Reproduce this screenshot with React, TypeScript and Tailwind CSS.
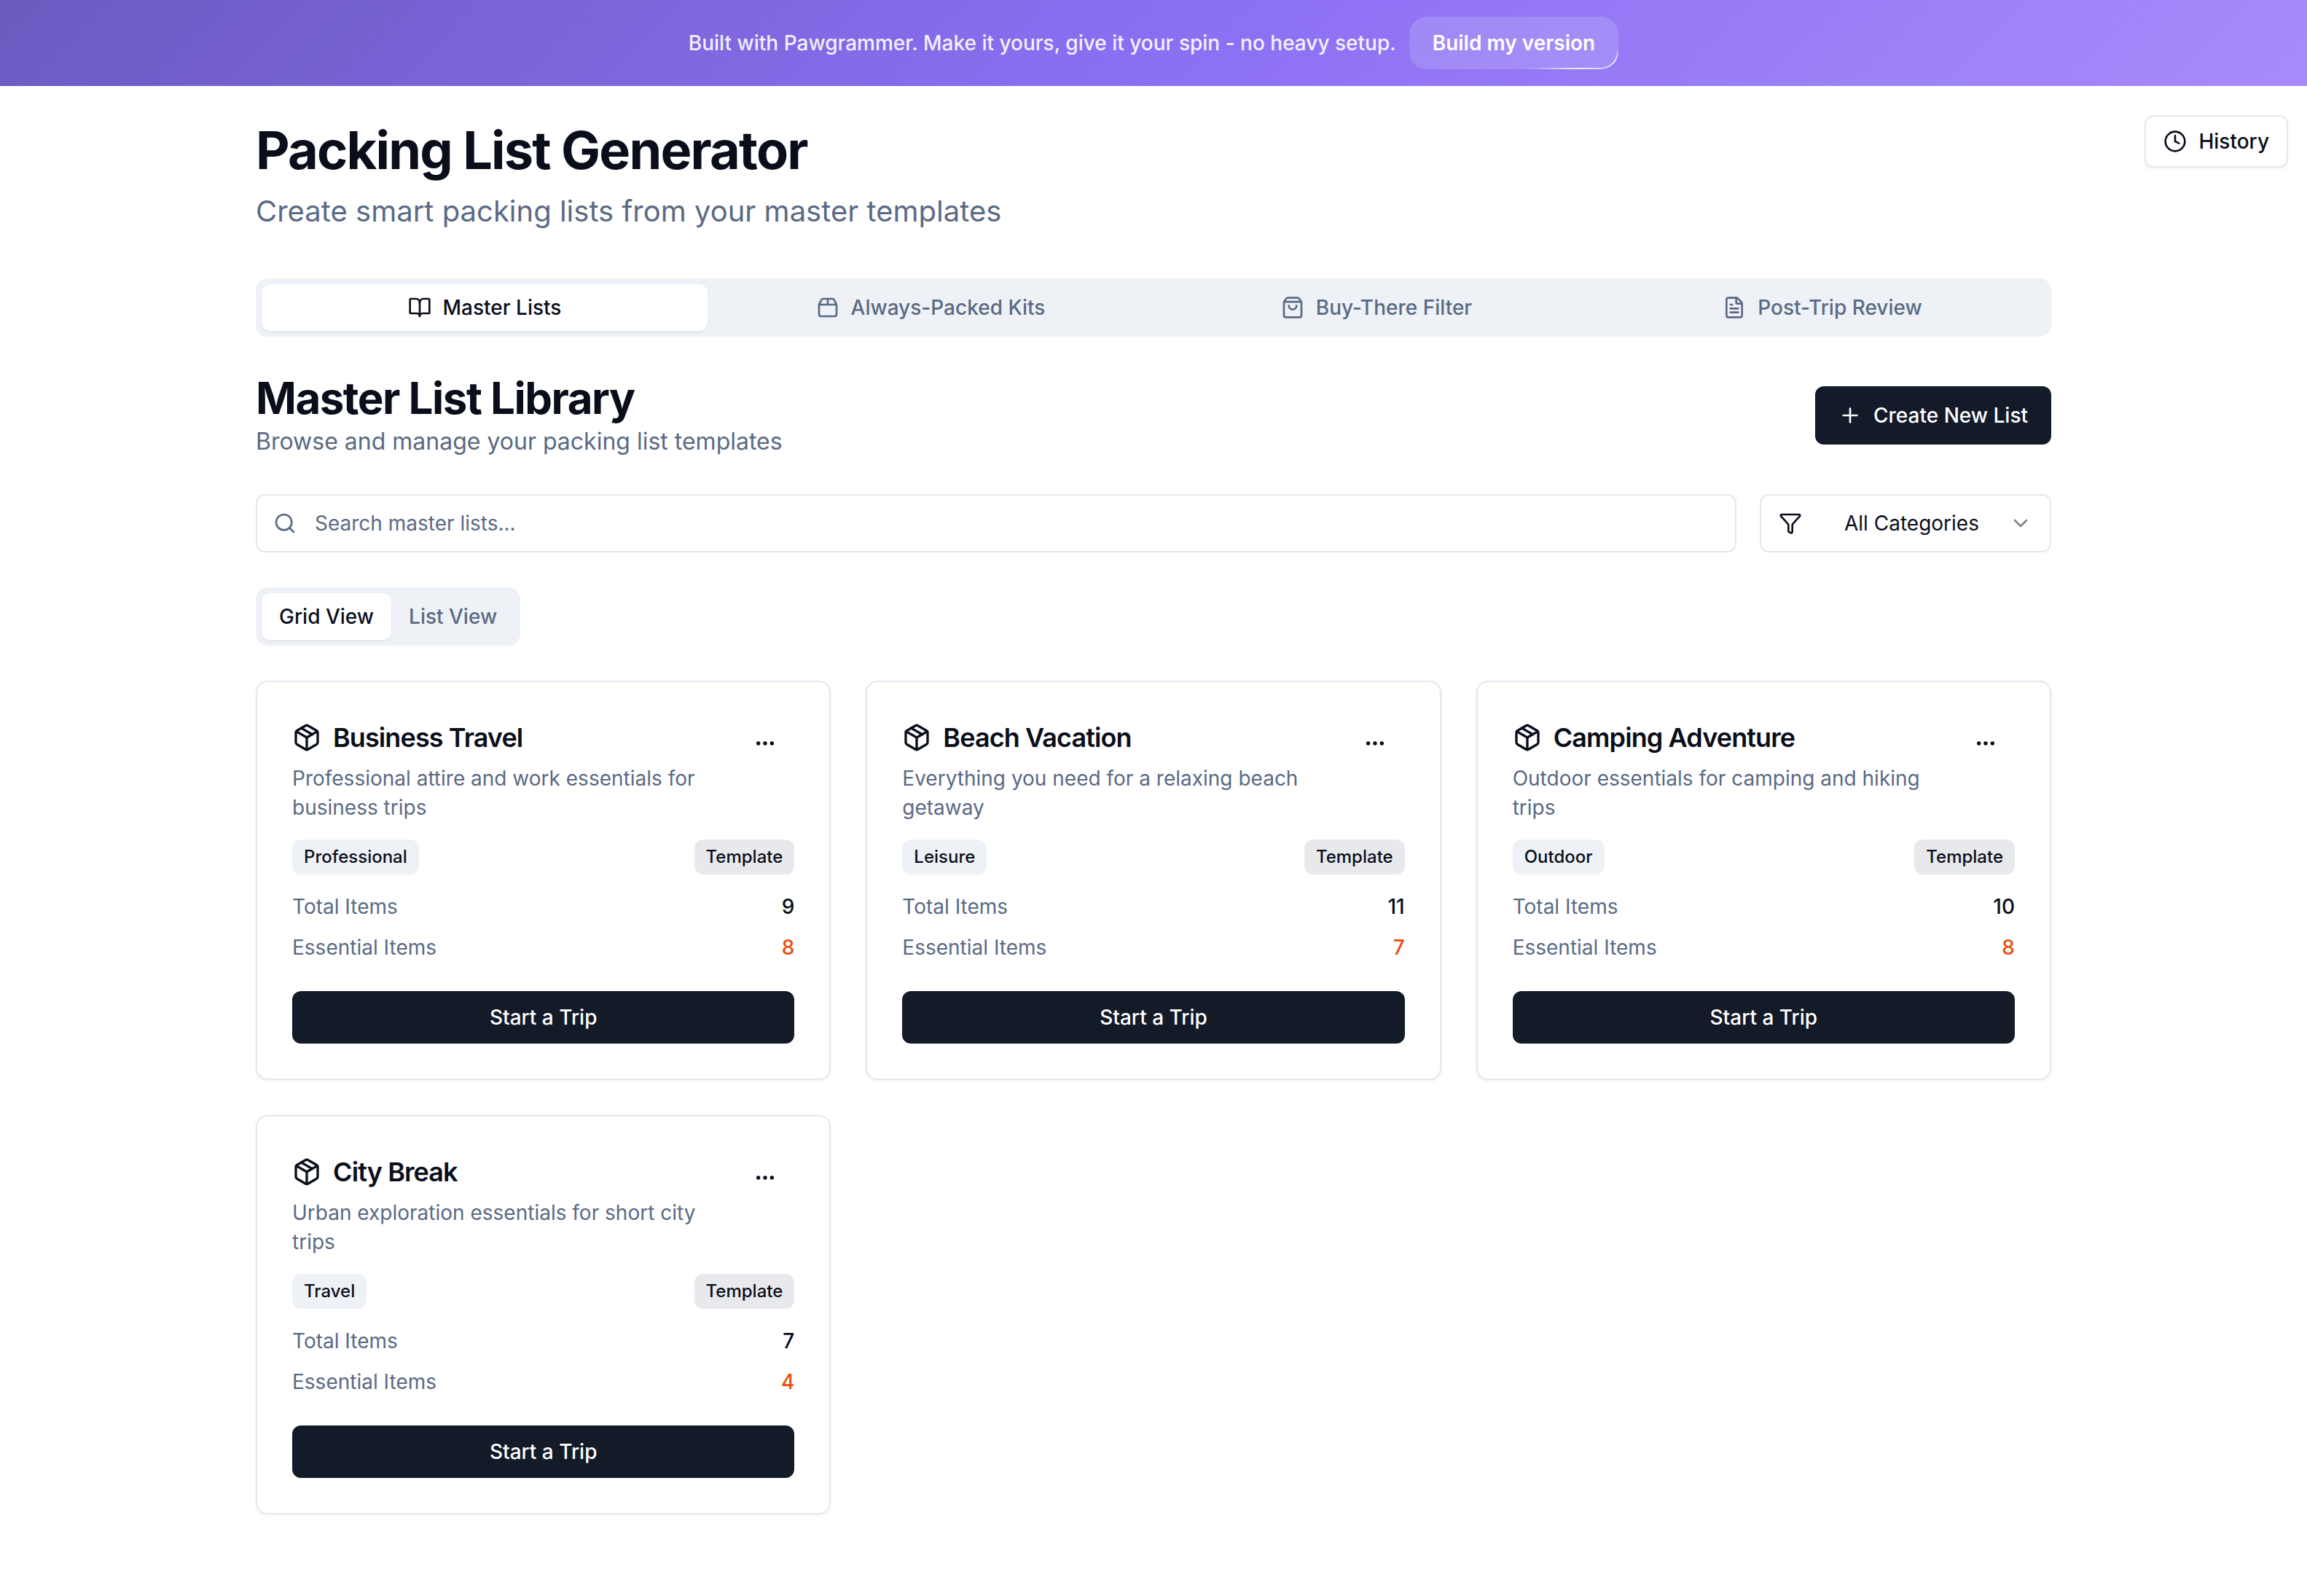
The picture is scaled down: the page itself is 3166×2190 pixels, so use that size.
import React from 'react';
import { BookOpen, ChevronDown, Clock, FileText, Filter, MoreHorizontal, Package, Package2, Plus, Search, ShoppingBag } from 'lucide-react';

const tabs = [
  { label: 'Master Lists', icon: BookOpen, active: true },
  { label: 'Always-Packed Kits', icon: Package2, active: false },
  { label: 'Buy-There Filter', icon: ShoppingBag, active: false },
  { label: 'Post-Trip Review', icon: FileText, active: false },
];

const lists = [
  { title: 'Business Travel', desc: 'Professional attire and work essentials for business trips', tag: 'Professional', total: 9, essential: 8 },
  { title: 'Beach Vacation', desc: 'Everything you need for a relaxing beach getaway', tag: 'Leisure', total: 11, essential: 7 },
  { title: 'Camping Adventure', desc: 'Outdoor essentials for camping and hiking trips', tag: 'Outdoor', total: 10, essential: 8 },
  { title: 'City Break', desc: 'Urban exploration essentials for short city trips', tag: 'Travel', total: 7, essential: 4 },
];

function ListCard({ item }: { item: (typeof lists)[number] }) {
  return (
    <div className="flex flex-col rounded-2xl border-2 border-[#e2e8f0] bg-white p-[48px] shadow-[0_2px_4px_rgba(0,0,0,0.05)]">
      <div className="flex items-start">
        <div className="w-[609px]">
          <div className="flex h-[56px] items-center gap-4">
            <Package size={40} strokeWidth={2} className="shrink-0" />
            <h3 className="text-[36px] leading-[56px] font-semibold tracking-[-0.9px] text-[#0a0e1a]">{item.title}</h3>
          </div>
          <p className="mt-2 text-[28px] leading-[40px] text-[#5a6a84]">{item.desc}</p>
        </div>
        <button className="flex h-[72px] w-[80px] shrink-0 items-center justify-center text-[#0a0e1a]">
          <MoreHorizontal size={32} strokeWidth={2} />
        </button>
      </div>
      <div className="mt-6 flex items-center justify-between">
        <span className="flex h-[48px] items-center rounded-xl bg-[#eef2f6] px-4 text-[24px] font-medium text-[#0a0e1a]">{item.tag}</span>
        <span className="flex h-[48px] items-center rounded-xl bg-[#e8e9ec] px-4 text-[24px] font-medium text-[#0a0e1a]">Template</span>
      </div>
      <div className="mt-6 flex flex-col gap-4 text-[28px] leading-[40px]">
        <div className="flex justify-between">
          <span className="text-[#5a6a84]">Total Items</span>
          <span className="font-medium text-[#0a0e1a]">{item.total}</span>
        </div>
        <div className="flex justify-between">
          <span className="text-[#5a6a84]">Essential Items</span>
          <span className="font-medium text-[#ea4d0e]">{item.essential}</span>
        </div>
      </div>
      <button className="mt-10 h-[72px] w-full rounded-xl bg-[#131a28] text-[28px] font-medium text-white">Start a Trip</button>
    </div>
  );
}

export default function App() {
  return (
    <div className="min-h-[2190px] bg-white font-['Inter',sans-serif] text-[#0a0e1a] antialiased">
      <div className="flex h-[118px] items-center justify-center gap-[18px] bg-[linear-gradient(135deg,#6c5ac0_0%,#8b6ff3_50%,#a78bfa_100%)]">
        <span className="text-[28px] font-medium text-white/90">Built with Pawgrammer. Make it yours, give it your spin - no heavy setup.</span>
        <a className="relative flex h-[72px] items-center rounded-[24px] bg-white/15 px-8 text-[28px] font-semibold text-white">
          Build my version
          <span className="absolute inset-0 rounded-[24px] bg-[linear-gradient(168deg,transparent_79%,rgba(255,255,255,0.85)_90%,rgba(255,255,255,0.4)_100%)] p-[2px] [mask:linear-gradient(#fff_0_0)_content-box_exclude,linear-gradient(#fff_0_0)]" />
        </a>
      </div>

      <div className="relative">
        <button className="absolute top-[40px] right-[26px] flex h-[72px] items-center gap-4 rounded-xl border-2 border-[#e2e8f0] bg-white px-6 text-[28px] font-medium shadow-[0_2px_4px_rgba(0,0,0,0.05)]">
          <Clock size={32} strokeWidth={2} />
          History
        </button>

        <div className="mx-auto w-[2464px] pt-[48px] pb-[112px]">
          <h1 className="text-[72px] leading-[80px] font-bold tracking-[-1.8px] text-[#0a0e1a]">Packing List Generator</h1>
          <p className="mt-4 text-[40px] leading-[56px] text-[#5a6a84]">Create smart packing lists from your master templates</p>

          <div className="mt-[64px] grid h-[80px] grid-cols-4 rounded-2xl bg-[#eef2f6] p-2">
            {tabs.map((tab) => {
              const Icon = tab.icon;
              return (
                <div
                  key={tab.label}
                  className={`flex items-center justify-center gap-4 rounded-xl text-[28px] font-medium ${
                    tab.active ? 'bg-white text-[#0a0e1a] shadow-[0_2px_4px_rgba(0,0,0,0.05)]' : 'text-[#5a6a84]'
                  }`}
                >
                  <Icon size={32} strokeWidth={2} />
                  {tab.label}
                </div>
              );
            })}
          </div>

          <div className="mt-12 flex items-center justify-between">
            <div>
              <h2 className="text-[60px] leading-[72px] font-bold tracking-[-1.5px] text-[#0a0e1a]">Master List Library</h2>
              <p className="text-[32px] leading-[48px] text-[#5a6a84]">Browse and manage your packing list templates</p>
            </div>
            <button className="flex h-[80px] items-center gap-4 rounded-xl bg-[#131a28] px-8 text-[28px] font-medium text-white">
              <Plus size={32} strokeWidth={2} />
              Create New List
            </button>
          </div>

          <div className="mt-12 flex gap-8">
            <div className="flex h-[80px] flex-1 items-center gap-[25px] rounded-xl border-2 border-[#e2e8f0] bg-white pl-[22px]">
              <Search size={32} strokeWidth={2} className="shrink-0 text-[#5a6a84]" />
              <input
                placeholder="Search master lists..."
                className="flex-1 bg-transparent text-[28px] outline-none placeholder:text-[#5a6a84]"
              />
            </div>
            <div className="flex h-[80px] w-[400px] items-center rounded-xl border-2 border-[#e2e8f0] bg-white px-6 text-[28px]">
              <Filter size={32} strokeWidth={2} className="shrink-0" />
              <span className="ml-[58px]">All Categories</span>
              <ChevronDown size={32} strokeWidth={2} className="ml-auto shrink-0 opacity-50" />
            </div>
          </div>

          <div className="mt-12 inline-flex h-[80px] rounded-2xl bg-[#eef2f6] p-2 text-[28px] font-medium">
            <div className="flex items-center rounded-xl bg-white px-6 text-[#0a0e1a] shadow-[0_2px_4px_rgba(0,0,0,0.05)]">Grid View</div>
            <div className="flex items-center px-6 text-[#5a6a84]">List View</div>
          </div>

          <div className="mt-12 grid grid-cols-3 gap-12">
            {lists.map((item) => (
              <ListCard key={item.title} item={item} />
            ))}
          </div>
        </div>
      </div>
    </div>
  );
}
